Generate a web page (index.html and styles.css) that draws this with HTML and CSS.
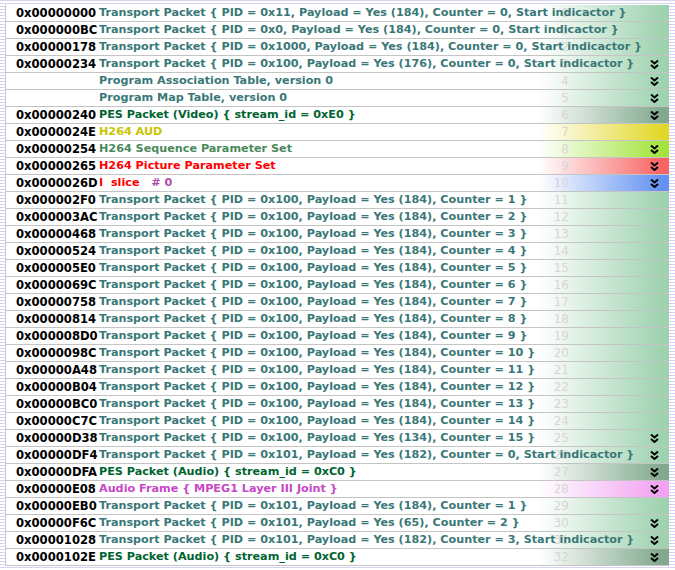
FILE: index.html
```html
<!DOCTYPE html>
<html>
<head>
<meta charset="utf-8">
<link rel="stylesheet" href="styles.css">
</head>
<body>
<svg width="0" height="0" class="defs">
  <defs>
    <symbol id="chev" viewBox="0 0 9 9">
      <path d="M1 0.5 L4.5 3.5 L8 0.5 M1 5 L4.5 8 L8 5" fill="none" stroke="#000" stroke-width="2"/>
    </symbol>
  </defs>
</svg>
<div class="panel">
  <div class="row ts"><span class="off">0x00000000</span><span class="num">0</span><span class="desc c-ts">Transport Packet { PID = 0x11, Payload = Yes (184), Counter = 0, Start indicactor }</span><span class="ico"></span></div>
  <div class="row ts"><span class="off">0x000000BC</span><span class="num">1</span><span class="desc c-ts">Transport Packet { PID = 0x0, Payload = Yes (184), Counter = 0, Start indicactor }</span><span class="ico"></span></div>
  <div class="row ts"><span class="off">0x00000178</span><span class="num">2</span><span class="desc c-ts">Transport Packet { PID = 0x1000, Payload = Yes (184), Counter = 0, Start indicactor }</span><span class="ico"></span></div>
  <div class="row ts"><span class="off">0x00000234</span><span class="num">3</span><span class="desc c-ts">Transport Packet { PID = 0x100, Payload = Yes (176), Counter = 0, Start indicactor }</span><span class="ico"><svg><use href="#chev"/></svg></span></div>
  <div class="row ts"><span class="off"></span><span class="num">4</span><span class="desc c-ts">Program Association Table, version 0</span><span class="ico"><svg><use href="#chev"/></svg></span></div>
  <div class="row ts"><span class="off"></span><span class="num">5</span><span class="desc c-ts">Program Map Table, version 0</span><span class="ico"><svg><use href="#chev"/></svg></span></div>
  <div class="row pes"><span class="off">0x00000240</span><span class="num">6</span><span class="desc c-pes">PES Packet (Video) { stream_id = 0xE0 }</span><span class="ico"><svg><use href="#chev"/></svg></span></div>
  <div class="row aud"><span class="off">0x0000024E</span><span class="num">7</span><span class="desc c-aud">H264 AUD</span><span class="ico"></span></div>
  <div class="row sps"><span class="off">0x00000254</span><span class="num">8</span><span class="desc c-sps">H264 Sequence Parameter Set</span><span class="ico"><svg><use href="#chev"/></svg></span></div>
  <div class="row pps"><span class="off">0x00000265</span><span class="num">9</span><span class="desc c-pps">H264 Picture Parameter Set</span><span class="ico"><svg><use href="#chev"/></svg></span></div>
  <div class="row isl"><span class="off">0x0000026D</span><span class="num">10</span><span class="desc c-pps">I  slice   <span class="c-idx"># 0</span></span><span class="ico"><svg><use href="#chev"/></svg></span></div>
  <div class="row ts"><span class="off">0x000002F0</span><span class="num">11</span><span class="desc c-ts">Transport Packet { PID = 0x100, Payload = Yes (184), Counter = 1 }</span><span class="ico"></span></div>
  <div class="row ts"><span class="off">0x000003AC</span><span class="num">12</span><span class="desc c-ts">Transport Packet { PID = 0x100, Payload = Yes (184), Counter = 2 }</span><span class="ico"></span></div>
  <div class="row ts"><span class="off">0x00000468</span><span class="num">13</span><span class="desc c-ts">Transport Packet { PID = 0x100, Payload = Yes (184), Counter = 3 }</span><span class="ico"></span></div>
  <div class="row ts"><span class="off">0x00000524</span><span class="num">14</span><span class="desc c-ts">Transport Packet { PID = 0x100, Payload = Yes (184), Counter = 4 }</span><span class="ico"></span></div>
  <div class="row ts"><span class="off">0x000005E0</span><span class="num">15</span><span class="desc c-ts">Transport Packet { PID = 0x100, Payload = Yes (184), Counter = 5 }</span><span class="ico"></span></div>
  <div class="row ts"><span class="off">0x0000069C</span><span class="num">16</span><span class="desc c-ts">Transport Packet { PID = 0x100, Payload = Yes (184), Counter = 6 }</span><span class="ico"></span></div>
  <div class="row ts"><span class="off">0x00000758</span><span class="num">17</span><span class="desc c-ts">Transport Packet { PID = 0x100, Payload = Yes (184), Counter = 7 }</span><span class="ico"></span></div>
  <div class="row ts"><span class="off">0x00000814</span><span class="num">18</span><span class="desc c-ts">Transport Packet { PID = 0x100, Payload = Yes (184), Counter = 8 }</span><span class="ico"></span></div>
  <div class="row ts"><span class="off">0x000008D0</span><span class="num">19</span><span class="desc c-ts">Transport Packet { PID = 0x100, Payload = Yes (184), Counter = 9 }</span><span class="ico"></span></div>
  <div class="row ts"><span class="off">0x0000098C</span><span class="num">20</span><span class="desc c-ts">Transport Packet { PID = 0x100, Payload = Yes (184), Counter = 10 }</span><span class="ico"></span></div>
  <div class="row ts"><span class="off">0x00000A48</span><span class="num">21</span><span class="desc c-ts">Transport Packet { PID = 0x100, Payload = Yes (184), Counter = 11 }</span><span class="ico"></span></div>
  <div class="row ts"><span class="off">0x00000B04</span><span class="num">22</span><span class="desc c-ts">Transport Packet { PID = 0x100, Payload = Yes (184), Counter = 12 }</span><span class="ico"></span></div>
  <div class="row ts"><span class="off">0x00000BC0</span><span class="num">23</span><span class="desc c-ts">Transport Packet { PID = 0x100, Payload = Yes (184), Counter = 13 }</span><span class="ico"></span></div>
  <div class="row ts"><span class="off">0x00000C7C</span><span class="num">24</span><span class="desc c-ts">Transport Packet { PID = 0x100, Payload = Yes (184), Counter = 14 }</span><span class="ico"></span></div>
  <div class="row ts"><span class="off">0x00000D38</span><span class="num">25</span><span class="desc c-ts">Transport Packet { PID = 0x100, Payload = Yes (134), Counter = 15 }</span><span class="ico"><svg><use href="#chev"/></svg></span></div>
  <div class="row ts"><span class="off">0x00000DF4</span><span class="num">26</span><span class="desc c-ts">Transport Packet { PID = 0x101, Payload = Yes (182), Counter = 0, Start indicactor }</span><span class="ico"><svg><use href="#chev"/></svg></span></div>
  <div class="row pes"><span class="off">0x00000DFA</span><span class="num">27</span><span class="desc c-pes">PES Packet (Audio) { stream_id = 0xC0 }</span><span class="ico"><svg><use href="#chev"/></svg></span></div>
  <div class="row afr"><span class="off">0x00000E08</span><span class="num">28</span><span class="desc c-afr">Audio Frame { MPEG1 Layer III Joint }</span><span class="ico"><svg><use href="#chev"/></svg></span></div>
  <div class="row ts"><span class="off">0x00000EB0</span><span class="num">29</span><span class="desc c-ts">Transport Packet { PID = 0x101, Payload = Yes (184), Counter = 1 }</span><span class="ico"></span></div>
  <div class="row ts"><span class="off">0x00000F6C</span><span class="num">30</span><span class="desc c-ts">Transport Packet { PID = 0x101, Payload = Yes (65), Counter = 2 }</span><span class="ico"><svg><use href="#chev"/></svg></span></div>
  <div class="row ts"><span class="off">0x00001028</span><span class="num">31</span><span class="desc c-ts">Transport Packet { PID = 0x101, Payload = Yes (182), Counter = 3, Start indicactor }</span><span class="ico"><svg><use href="#chev"/></svg></span></div>
  <div class="row pes"><span class="off">0x0000102E</span><span class="num">32</span><span class="desc c-pes">PES Packet (Audio) { stream_id = 0xC0 }</span><span class="ico"><svg><use href="#chev"/></svg></span></div>
</div>
</body>
</html>
```
FILE: styles.css
```css
html, body {
  margin: 0;
  padding: 0;
}
body {
  width: 675px;
  height: 570px;
  overflow: hidden;
  background: repeating-linear-gradient(to bottom, #d4d4f2 0, #d4d4f2 1px, #ffffff 1px, #ffffff 3px);
  font-family: "DejaVu Sans", Verdana, sans-serif;
  font-weight: bold;
  font-size: 11.2px;
}
.defs {
  position: absolute;
  width: 0;
  height: 0;
}
.panel {
  margin: 5px 0 0 5px;
  width: 663px;
  border-left: 1px solid #c8c8c8;
  background: #fff;
}
.row {
  display: grid;
  grid-template-columns: 83px 1fr 19px;
  height: 16px;
  line-height: 16px;
  padding-left: 10px;
  border-bottom: 1px solid #c4c4c4;
  white-space: pre;
}
.off {
  grid-column: 1;
  grid-row: 1;
  color: #000;
  font-size: 11.6px;
}
.num {
  grid-column: 2;
  grid-row: 1;
  justify-self: end;
  margin-right: 81px;
  color: #d6d6d6;
  font-weight: normal;
  font-size: 12px;
}
.desc {
  grid-column: 2;
  grid-row: 1;
  overflow: visible;
}
.ico {
  grid-column: 3;
  grid-row: 1;
  display: flex;
  align-items: center;
}
.ico svg {
  width: 9px;
  height: 9px;
}
.ts  { background: linear-gradient(to right, #fff calc(100% - 130px), #9fd3b0 calc(100% - 8px)); }
.pes { background: linear-gradient(to right, #fff calc(100% - 130px), #82a98e calc(100% - 8px)); }
.aud { background: linear-gradient(to right, #fff calc(100% - 130px), #e2d82a calc(100% - 8px)); }
.sps { background: linear-gradient(to right, #fff calc(100% - 130px), #a2e43c calc(100% - 8px)); }
.pps { background: linear-gradient(to right, #fff calc(100% - 130px), #f86464 calc(100% - 8px)); }
.isl { background: linear-gradient(to right, #fff calc(100% - 130px), #6492f2 calc(100% - 8px)); }
.afr { background: linear-gradient(to right, #fff calc(100% - 130px), #f2a2f2 calc(100% - 8px)); }

.c-ts  { color: #3a7878; }
.c-pes { color: #006430; }
.c-aud { color: #c8c400; }
.c-sps { color: #4a8a5a; }
.c-pps { color: #ff0000; }
.c-idx { color: #b04cb0; }
.c-afr { color: #c846c8; }
```
